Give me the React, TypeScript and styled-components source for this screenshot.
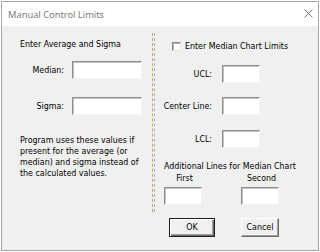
import React from "react";
import styled, { createGlobalStyle } from "styled-components";

const GlobalStyle = createGlobalStyle`
  html, body {
    margin: 0;
    padding: 0;
    background: #ffffff;
  }
  body {
    width: 320px;
    height: 252px;
    overflow: hidden;
  }
`;

const Window = styled.div`
  margin: 1px;
  width: 318px;
  height: 250px;
  box-sizing: border-box;
  border: 1px solid #a7a7a7;
  display: flex;
  flex-direction: column;
  background: #f0f0f0;
  font-family: "DejaVu Sans Condensed", "DejaVu Sans", sans-serif;
  font-stretch: condensed;
  font-size: 8.8px;
  line-height: 11px;
  color: #000;
`;

const TitleBar = styled.div`
  height: 24px;
  flex: none;
  background: #ffffff;
  display: flex;
  align-items: center;
  justify-content: space-between;
  padding: 0 5px 0 6px;
`;

const Title = styled.span`
  font-family: "Noto Sans", "Liberation Sans", sans-serif;
  font-stretch: normal;
  font-size: 9.3px;
  color: #7b7b7b;
  margin-top: 1px;
`;

const CloseIcon = styled.svg`
  width: 9px;
  height: 9px;
  margin-top: -1px;
`;

const Body = styled.div`
  flex: 1;
  display: flex;
`;

const LeftPane = styled.div`
  width: 149px;
  flex: none;
  box-sizing: border-box;
  padding: 13px 0 0 18px;
  display: flex;
  flex-direction: column;
`;

const Heading = styled.div<{ $top?: number; $left?: number }>`
  margin-top: ${(p) => p.$top ?? 0}px;
  margin-left: ${(p) => p.$left ?? 0}px;
  white-space: nowrap;
`;

const FieldRow = styled.div<{ $label: number; $box: number; $gap: number; $top: number; $left?: number }>`
  display: grid;
  grid-template-columns: ${(p) => p.$label}px ${(p) => p.$box}px;
  column-gap: ${(p) => p.$gap}px;
  align-items: center;
  margin-top: ${(p) => p.$top}px;
  margin-left: ${(p) => p.$left ?? 0}px;
`;

const FieldLabel = styled.span`
  text-align: right;
  white-space: nowrap;
`;

const TextBox = styled.div<{ $w: number }>`
  width: ${(p) => p.$w}px;
  height: 18px;
  box-sizing: border-box;
  background: #ffffff;
  border-style: solid;
  border-width: 1px;
  border-color: #8e8e8e #f4f4f4 #f4f4f4 #8e8e8e;
  box-shadow: inset 1px 1px 0 #c4c4c4;
`;

const Note = styled.p`
  margin: 20px 0 0 0;
  line-height: 11px;
`;

const Divider = styled.div`
  flex: none;
  width: 1px;
  height: 179px;
  margin-top: 7px;
  margin-left: 1px;
  border-left: 1px dashed #d2a05a;
  border-right: 1px dashed #a9b3bf;
`;

const RightPane = styled.div`
  flex: 1;
  display: flex;
  flex-direction: column;
  padding-top: 15px;
`;

const CheckRow = styled.label`
  display: flex;
  align-items: center;
  gap: 4px;
  margin-left: 17px;
  white-space: nowrap;
`;

const CheckBox = styled.span`
  width: 9px;
  height: 9px;
  box-sizing: border-box;
  background: #ffffff;
  border-style: solid;
  border-width: 1px;
  border-color: #8a8a8a #e8e8e8 #e8e8e8 #8a8a8a;
  box-shadow: inset 1px 1px 0 #b4b4b4;
`;

const ExtraGrid = styled.div`
  display: grid;
  grid-template-columns: 38px 38px;
  column-gap: 39px;
  margin-left: 9px;
  margin-top: 1px;
`;

const Caption = styled.span`
  text-align: center;
  margin-left: 3px;
  white-space: nowrap;
`;

const BoxCell = styled.div`
  margin-top: 3px;
`;

const ButtonRow = styled.div`
  display: flex;
  gap: 26px;
  margin: 13px 0 0 14px;
`;

const Button = styled.div<{ $w: number; $default?: boolean }>`
  width: ${(p) => p.$w}px;
  height: 19px;
  box-sizing: border-box;
  display: flex;
  align-items: center;
  justify-content: center;
  background: #f0f0f0;
  border: 1px solid;
  border-color: ${(p) => (p.$default ? "#1e1e1e" : "#ffffff #6b6b6b #6b6b6b #ffffff")};
  box-shadow: ${(p) =>
    p.$default
      ? "inset 1px 1px 0 #ffffff, inset -1px -1px 0 #6b6b6b, inset -2px -2px 0 #a0a0a0"
      : "inset -1px -1px 0 #a0a0a0"};
`;

export default function App() {
  return (
    <>
      <GlobalStyle />
      <Window>
        <TitleBar>
          <Title>Manual Control Limits</Title>
          <CloseIcon viewBox="0 0 9 9">
            <path d="M0.5 0.5 L8.5 8.5 M8.5 0.5 L0.5 8.5" stroke="#6e6e6e" strokeWidth="0.9" fill="none" />
          </CloseIcon>
        </TitleBar>
        <Body>
          <LeftPane>
            <Heading>Enter Average and Sigma</Heading>
            <FieldRow $label={44} $box={70} $gap={8} $top={11}>
              <FieldLabel>Median:</FieldLabel>
              <TextBox $w={70} />
            </FieldRow>
            <FieldRow $label={44} $box={70} $gap={8} $top={18}>
              <FieldLabel>Sigma:</FieldLabel>
              <TextBox $w={70} />
            </FieldRow>
            <Note>
              Program uses these values if
              <br />
              present for the average (or
              <br />
              median) and sigma instead of
              <br />
              the calculated values.
            </Note>
          </LeftPane>
          <Divider />
          <RightPane>
            <CheckRow>
              <CheckBox />
              Enter Median Chart Limits
            </CheckRow>
            <FieldRow $label={51} $box={38} $gap={10} $top={13} $left={6}>
              <FieldLabel>UCL:</FieldLabel>
              <TextBox $w={38} />
            </FieldRow>
            <FieldRow $label={51} $box={38} $gap={10} $top={14} $left={6}>
              <FieldLabel>Center Line:</FieldLabel>
              <TextBox $w={38} />
            </FieldRow>
            <FieldRow $label={51} $box={38} $gap={10} $top={15} $left={6}>
              <FieldLabel>LCL:</FieldLabel>
              <TextBox $w={38} />
            </FieldRow>
            <Heading $top={13} $left={9}>
              Additional Lines for Median Chart
            </Heading>
            <ExtraGrid>
              <Caption>First</Caption>
              <Caption>Second</Caption>
              <BoxCell>
                <TextBox $w={38} />
              </BoxCell>
              <BoxCell>
                <TextBox $w={38} />
              </BoxCell>
            </ExtraGrid>
            <ButtonRow>
              <Button $w={46} $default>
                OK
              </Button>
              <Button $w={38}>Cancel</Button>
            </ButtonRow>
          </RightPane>
        </Body>
      </Window>
    </>
  );
}
